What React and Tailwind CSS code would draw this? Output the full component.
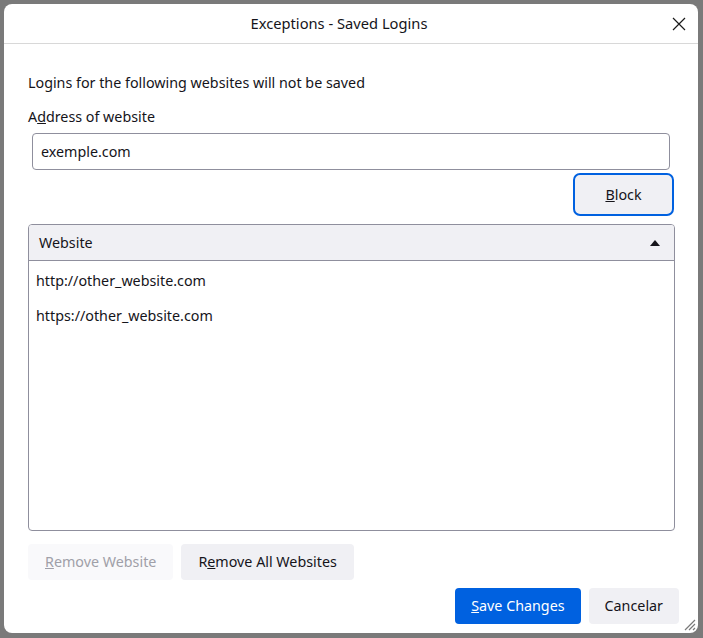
export default function App() {
  return (
    <div className="w-[703px] h-[638px] bg-[#7a7a7a] p-[4px] pr-[5px] pb-[5px] text-[#15141a]" style={{ fontFamily: '"Noto Sans", "Open Sans", sans-serif' }}>
      <div className="h-full bg-white rounded-[8px] flex flex-col relative">
        {/* title bar */}
        <div className="h-[40px] shrink-0 border-b border-[#d8d8d8] flex items-center justify-center relative pr-[24px]">
          <span className="text-[14.7px]">Exceptions - Saved Logins</span>
          <svg className="absolute right-[12px] top-[13px]" width="14" height="14" viewBox="0 0 14 14">
            <path d="M1 1L13 13M13 1L1 13" stroke="#1a1a1a" strokeWidth="1.2" />
          </svg>
        </div>

        <div className="flex-1 flex flex-col px-[24px] pt-[29px] text-[14.3px]">
          <p className="leading-[20px]">Logins for the following websites will not be saved</p>
          <label className="mt-[14px] leading-[20px]">
            A<span className="underline">d</span>dress of website
          </label>
          <div className="mt-[6px] ml-[4px] mr-[4px] h-[37px] border border-[#8f8f9d] rounded-[4px] flex items-center px-[8px]">
            exemple.com
          </div>
          <div className="flex justify-end mt-[3px] mr-[0px]">
            <button className="w-[101px] h-[43px] rounded-[7px] border-2 border-[#0061e0] bg-[#f0f0f4] p-[2px]">
              <span className="underline">B</span>lock
            </button>
          </div>

          {/* table */}
          <div className="mt-[8px] mr-[-1px] h-[307px] border border-[#8f8f9d] rounded-[4px] flex flex-col overflow-hidden">
            <div className="h-[36px] shrink-0 bg-[#f0f0f4] border-b border-[#8f8f9d] flex items-center justify-between pl-[10px] pr-[14px]">
              <span>Website</span>
              <svg width="10" height="6" viewBox="0 0 10 6">
                <path d="M0 6L5 0L10 6Z" fill="#15141a" />
              </svg>
            </div>
            <div className="flex flex-col pt-[2px]">
              <div className="h-[35px] flex items-center pl-[7px]">http://other_website.com</div>
              <div className="h-[35px] flex items-center pl-[7px]">https://other_website.com</div>
            </div>
          </div>

          <div className="flex gap-[8px] mt-[13px]">
            <button className="h-[36px] px-[17px] rounded-[4px] bg-[#f9f9fb] text-[#a0a0a8]">
              <span className="underline">R</span>emove Website
            </button>
            <button className="h-[36px] px-[17px] rounded-[4px] bg-[#f0f0f4]">
              R<span className="underline">e</span>move All Websites
            </button>
          </div>

          <div className="flex justify-end gap-[8px] mt-[8px] mr-[-5px]">
            <button className="h-[36px] px-[16px] rounded-[4px] bg-[#0061e0] text-white">
              <span className="underline">S</span>ave Changes
            </button>
            <button className="h-[36px] px-[16px] rounded-[4px] bg-[#f0f0f4]">Cancelar</button>
          </div>
        </div>

        <svg className="absolute right-[2px] bottom-[2px]" width="14" height="14" viewBox="0 0 14 14">
          <path d="M13 3L3 13M13 7L7 13M13 11L11 13" stroke="#7a7a7a" strokeWidth="1.2" />
        </svg>
      </div>
    </div>
  );
}
